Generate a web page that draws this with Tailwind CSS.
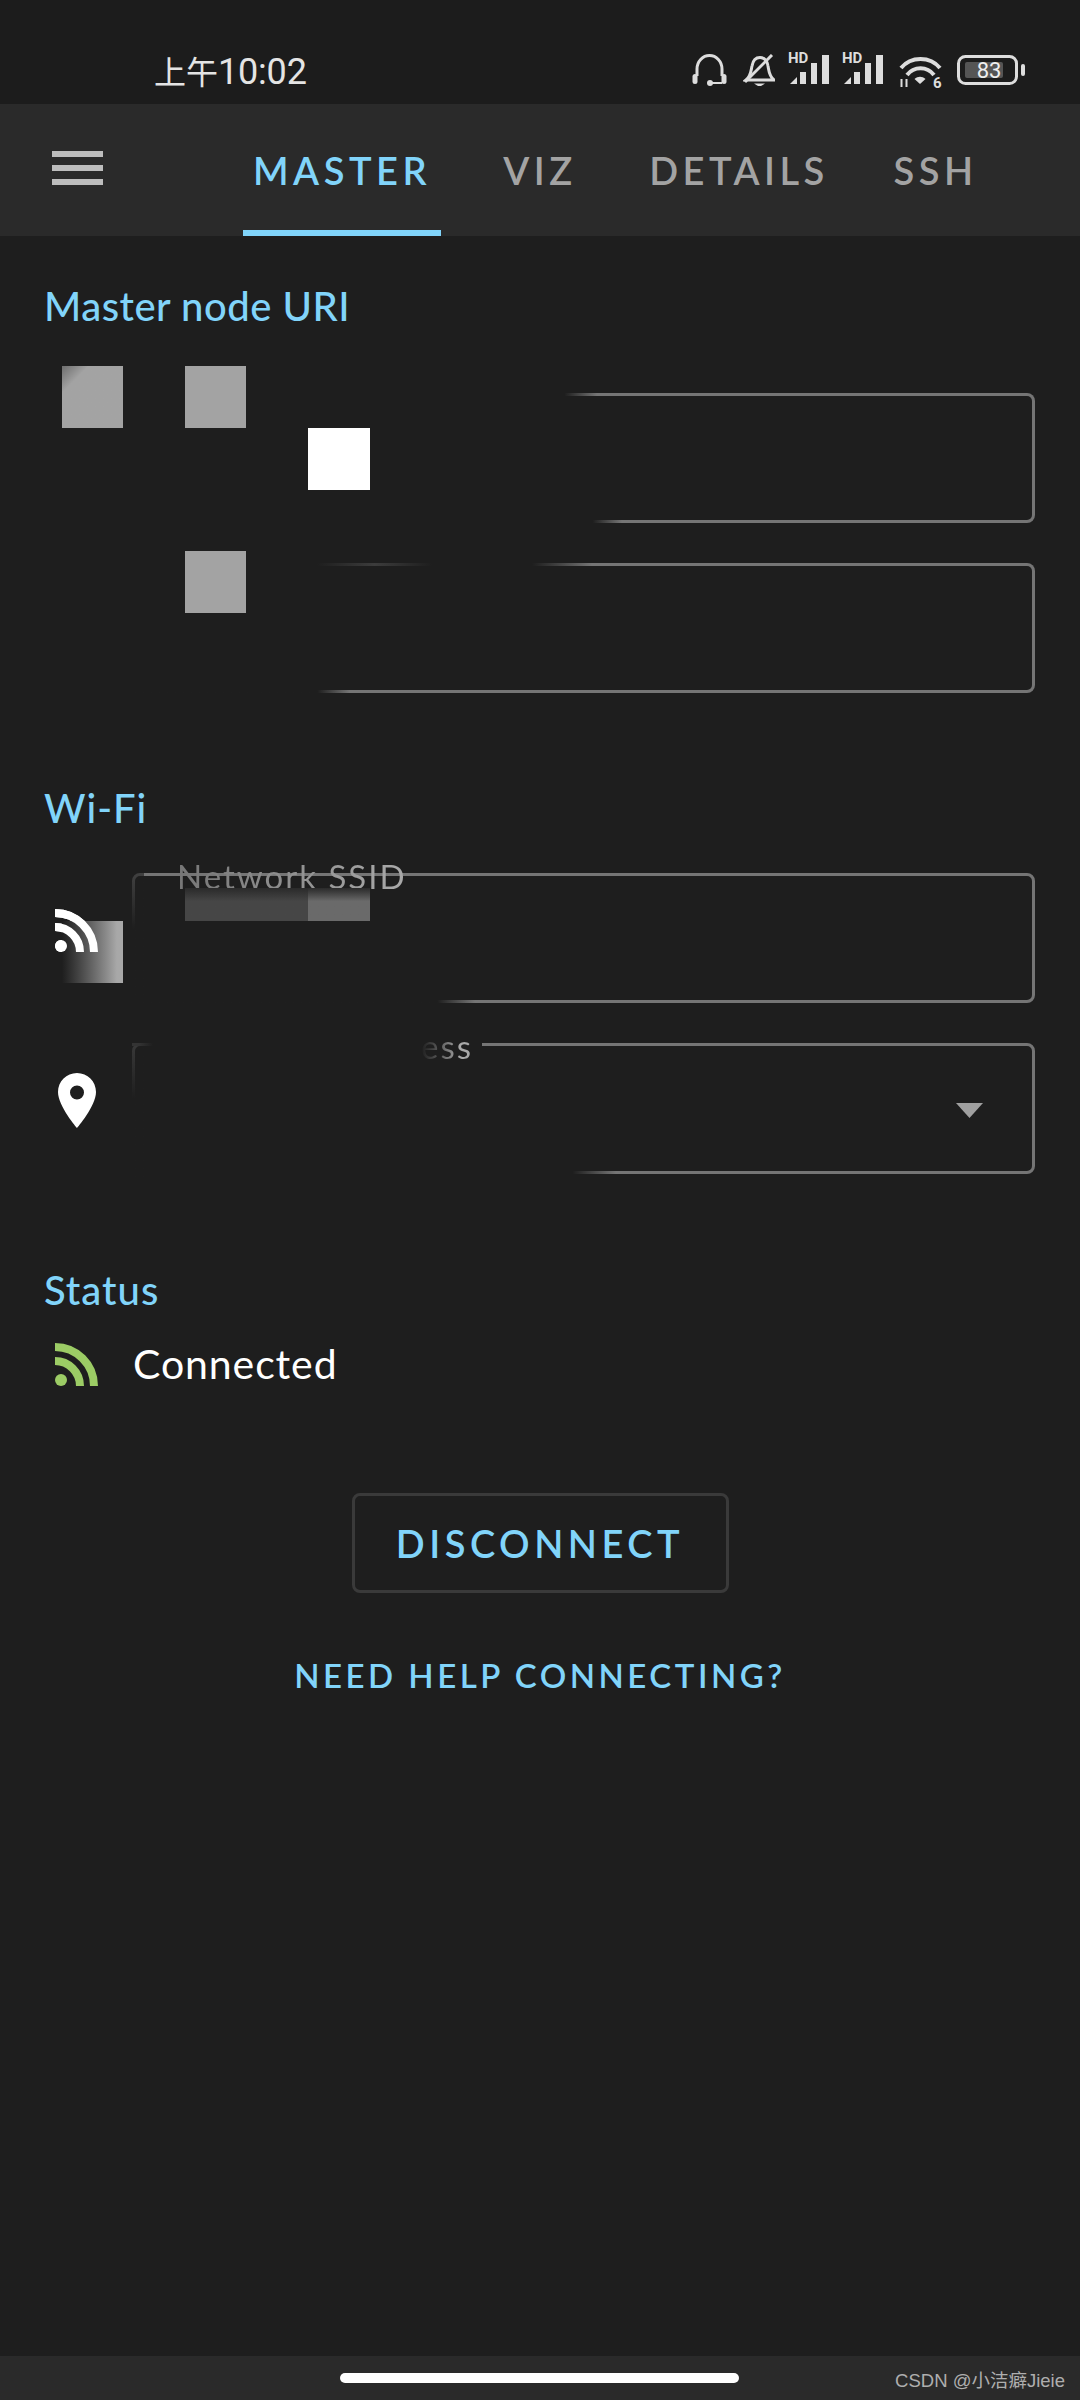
<!DOCTYPE html>
<html lang="en">
<head>
  <meta charset="UTF-8" />
  <title>Master</title>
  <script src="https://cdn.jsdelivr.net/npm/@tailwindcss/browser@4"></script>
</head>
<body class="bg-[#1e1e1e] font-['Lato','Noto_Sans_CJK_SC',sans-serif] text-white">
<div class="relative w-[1080px] h-[2400px] overflow-hidden flex flex-col">

  <!-- status bar -->
  <div class="h-[104px] shrink-0 bg-[#1c1c1c] flex items-start">
    <div class="ml-[154px] mt-[52px] flex items-baseline leading-[40px] text-[#e4e4e4] font-['Roboto','Noto_Sans_CJK_SC',sans-serif]">
      <span class="text-[32px]">上午</span>
      <span class="text-[36px] tracking-[-0.2px]">10:02</span>
    </div>
    <div class="ml-auto mr-[55px] mt-[47px] flex items-start">
      <svg class="mt-[7px]" width="35" height="32" viewBox="0 0 35 32" fill="none" stroke="#ddd" stroke-width="3"><path d="M5 22V15A12.5 13.500 0 0 1 30 15V22"/><rect x="0.500" y="20" width="5" height="10" rx="2.500" fill="#ddd" stroke="none"/><rect x="29.500" y="20" width="5" height="10" rx="2.500" fill="#ddd" stroke="none"/><path d="M18 29H30" stroke-width="2"/><circle cx="18" cy="29" r="3" fill="#ddd" stroke="none"/></svg>
      <svg class="ml-[16px] mt-[7px]" width="32" height="32" viewBox="0 0 32 32" fill="none" stroke="#ddd" stroke-width="3"><path d="M3 26C8 22 8 16 9 12C10 6 13 3.500 17 3.500C21 3.500 24 6 25 12C26 17 26 22 31 26Z"/><path d="M29 1L2 28"/><path d="M11 29.500H22L18 32H15Z" fill="#ddd" stroke="none"/></svg>
      <svg class="ml-[13px]" width="41" height="37" viewBox="0 -5 41 37" fill="#ddd"><text x="0" y="11" font-size="15" font-weight="700" font-family="Roboto">HD</text><path d="M2 32L9 25V32Z"/><rect x="12" y="20" width="6" height="12"/><rect x="23" y="11" width="6" height="21"/><rect x="34" y="3" width="7" height="29"/></svg>
      <svg class="ml-[13px]" width="41" height="37" viewBox="0 -5 41 37" fill="#ddd"><text x="0" y="11" font-size="15" font-weight="700" font-family="Roboto">HD</text><path d="M2 32L9 25V32Z"/><rect x="12" y="20" width="6" height="12"/><rect x="23" y="11" width="6" height="21"/><rect x="34" y="3" width="7" height="29"/></svg>
      <svg class="ml-[16px] mt-[8px]" width="45" height="37" viewBox="0 0 45 37" fill="none" stroke="#ddd" stroke-width="4"><path d="M2 13C12 1 31 1 41 13"/><path d="M8 20C15 11 28 11 35 20"/><path d="M15.500 24L21 29L26.500 24C23 21 19 21 15.500 24Z" fill="#ddd" stroke="none"/><path d="M2.500 24V32M7.500 24V32" stroke-width="2"/><text x="34" y="33" font-size="15" font-weight="700" font-family="Roboto" fill="#ddd" stroke="none">6</text></svg>
      <svg class="ml-[13px] mt-[8px]" width="68" height="30" viewBox="0 0 68 30" fill="none"><rect x="1.500" y="1.500" width="58" height="27" rx="7" stroke="#ddd" stroke-width="3"/><rect x="8" y="7" width="38" height="16" rx="2" fill="#555"/><text x="32" y="22.500" text-anchor="middle" font-size="22" font-family="Roboto" fill="#eee">83</text><rect x="64" y="9" width="4" height="12" rx="2" fill="#ddd"/></svg>
    </div>
  </div>

  <!-- tabs -->
  <div class="h-[132px] shrink-0 bg-[#2a2a2a] flex items-stretch">
    <div class="w-[243px] shrink-0 pl-[52px] pt-[47px] flex flex-col gap-[8px]">
      <span class="block w-[51px] h-[6px] bg-[#bdbdbd]"></span>
      <span class="block w-[51px] h-[6px] bg-[#bdbdbd]"></span>
      <span class="block w-[51px] h-[6px] bg-[#bdbdbd]"></span>
    </div>
    <div class="flex text-[38px] font-semibold tracking-[4.500px] leading-[48px] text-[#a3a3a3]">
      <div class="w-[198px] pt-[42px] text-center text-[#81d4fa] border-b-[6px] border-[#81d4fa]">MASTER</div>
      <div class="w-[198px] pt-[42px] text-center">VIZ</div>
      <div class="w-[200px] pt-[42px] text-center">DETAILS</div>
      <div class="w-[193px] pt-[42px] text-center">SSH</div>
    </div>
  </div>

  <main class="flex-1 px-[45px] pt-[46px] flex flex-col">
    <h2 class="-ml-[1px] text-[40px] tracking-[0.500px] leading-[48px] text-[#81d4fa] font-medium">Master node URI</h2>
    <div class="mt-[63px] flex flex-col gap-[40px]">
      <div class="relative ml-[87px] h-[130px] border-[3px] border-l-0 border-[#757575] rounded-r-lg">
        <div class="absolute left-0 -top-[3px] w-[465px] h-[3px] bg-linear-to-r from-[#1e1e1e] from-[93%] to-transparent"></div>
        <div class="absolute left-0 -bottom-[3px] w-[490px] h-[3px] bg-linear-to-r from-[#1e1e1e] from-[94%] to-transparent"></div>
      </div>
      <div class="relative ml-[87px] h-[130px] border-[3px] border-l-0 border-[#757575] rounded-r-lg">
        <div class="absolute left-0 -top-[3px] w-[460px] h-[3px] bg-[#1e1e1e]"></div>
        <div class="absolute left-[185px] -top-[3px] w-[115px] h-[3px] bg-linear-to-r from-transparent via-[#3c3c3c] to-transparent"></div>
        <div class="absolute left-[400px] -top-[3px] w-[60px] h-[3px] bg-linear-to-r from-[#1e1e1e] to-[#757575]"></div>
        <div class="absolute left-0 -bottom-[3px] w-[218px] h-[3px] bg-linear-to-r from-[#1e1e1e] from-[85%] to-transparent"></div>
      </div>
    </div>

    <h2 class="-ml-[1px] mt-[91px] text-[40px] tracking-[1px] leading-[48px] text-[#81d4fa] font-medium">Wi-Fi</h2>
    <div class="mt-[41px] flex flex-col gap-[40px]">
      <div class="flex items-start">
        <svg class="ml-[10px] mr-[34px] mt-[36px] shrink-0" width="43" height="43" viewBox="0 0 43 43" fill="none" stroke="#fff" stroke-width="8"><circle cx="6" cy="37" r="6" fill="#fff" stroke="none"/><path d="M0 18A25 25 0 0 1 25 43"/><path d="M0 4A39 39 0 0 1 39 43"/></svg>
        <div class="relative flex-1 h-[130px] border-[3px] border-[#757575] rounded-lg">
          <div class="absolute -left-[3px] -top-[3px] w-[12px] h-[133px] bg-linear-to-b from-[#1e1e1e]/60 to-[#1e1e1e] to-[42%]"></div>
          <div class="absolute -left-[3px] -bottom-[3px] w-[343px] h-[3px] bg-linear-to-r from-[#1e1e1e] from-[89%] to-transparent"></div>
          <span class="absolute left-[30px] -top-[20px] px-[12px] bg-[#1e1e1e] text-[33px] leading-[40px] tracking-[2px] text-transparent bg-clip-text bg-linear-to-r from-[#747474] to-[#adadad] whitespace-nowrap">Network SSID</span>
        </div>
      </div>
      <div class="flex items-start">
        <svg class="ml-[13px] mr-[36px] mt-[30px] shrink-0" width="38" height="55" viewBox="0 0 38 55" fill="#fff"><path fill-rule="evenodd" d="M19 0C8.500 0 0 8.500 0 19C0 33 19 55 19 55S38 33 38 19C38 8.500 29.500 0 19 0ZM19 12.500A7 7 0 1 1 19 26.500A7 7 0 1 1 19 12.500Z"/></svg>
        <div class="relative flex-1 h-[131px] border-[3px] border-[#757575] rounded-lg">
          <div class="absolute -left-[3px] -top-[3px] w-[350px] h-[3px] bg-linear-to-r from-[#333] from-[2%] to-[#1e1e1e] to-[6%]"></div>
          <div class="absolute -left-[3px] top-0 w-[12px] h-[131px] bg-linear-to-b from-[#1e1e1e]/70 to-[#1e1e1e] to-[40%]"></div>
          <div class="absolute -left-[3px] -bottom-[3px] w-[484px] h-[3px] bg-linear-to-r from-[#1e1e1e] from-[91%] to-transparent"></div>
          <span class="absolute left-[30px] -top-[20px] w-[320px] h-[40px] pr-[12px] bg-[#1e1e1e] text-right text-[33px] leading-[40px] tracking-[2px] text-transparent bg-clip-text bg-linear-to-r from-[#1e1e1e] from-[80%] to-[#a8a8a8] to-[92%] whitespace-nowrap">ess</span>
          <svg class="absolute right-[49px] top-[57px]" width="27" height="15" viewBox="0 0 27 15" fill="#a0a0a0"><path d="M0 0H27L13.500 15Z"/></svg>
        </div>
      </div>
    </div>

    <h2 class="-ml-[1px] mt-[92px] text-[40px] tracking-[1px] leading-[48px] text-[#81d4fa] font-medium">Status</h2>
    <div class="mt-[26px] flex items-center h-[48px]">
      <svg class="ml-[10px] mr-[35px]" width="43" height="43" viewBox="0 0 43 43" fill="none" stroke="#9ccc65" stroke-width="8"><circle cx="6" cy="37" r="6" fill="#9ccc65" stroke="none"/><path d="M0 18A25 25 0 0 1 25 43"/><path d="M0 4A39 39 0 0 1 39 43"/></svg>
      <span class="text-[41px] tracking-[0.900px] leading-[48px] text-white">Connected</span>
    </div>

    <button class="mt-[105px] mx-auto w-[377px] h-[100px] border-[3px] border-[#3a3a3a] rounded-lg text-[38px] font-semibold tracking-[4.500px] text-[#81d4fa]">DISCONNECT</button>
    <a class="mt-[62px] text-center text-[33px] leading-[40px] font-semibold tracking-[3.500px] text-[#81d4fa]">NEED HELP CONNECTING?</a>
  </main>

  <!-- nav bar -->
  <div class="h-[44px] shrink-0 bg-[#2a2a2a] relative">
    <div class="absolute left-[340px] top-[17px] w-[399px] h-[10px] rounded-full bg-white"></div>
    <span class="absolute right-[15px] top-[13px] text-[18.500px] leading-[24px] text-[#aeaeae] font-['Liberation_Sans','Noto_Sans_CJK_SC',sans-serif]">CSDN @小洁癖Jieie</span>
  </div>

  <!-- mosaic redaction over the fields -->
  <div class="absolute left-[62px] top-[366px] w-[61px] h-[62px] bg-linear-to-br from-[#6e6e6e] to-[#a3a3a3] to-[22%]"></div>
  <div class="absolute left-[185px] top-[366px] w-[61px] h-[62px] bg-[#a3a3a3]"></div>
  <div class="absolute left-[308px] top-[428px] w-[62px] h-[62px] bg-white"></div>
  <div class="absolute left-[185px] top-[551px] w-[61px] h-[62px] bg-[#a3a3a3]"></div>
  <div class="absolute left-[185px] top-[888px] w-[123px] h-[33px] bg-linear-to-b from-[#2a2a2a] to-[#464646] to-[40%]"></div>
  <div class="absolute left-[308px] top-[888px] w-[62px] h-[33px] bg-linear-to-b from-[#2a2a2a] to-[#6a6a6a] to-[40%]"></div>
  <div class="absolute left-[62px] top-[921px] w-[61px] h-[62px] bg-linear-to-r from-[#1e1e1e] to-[#a8a8a8] to-[90%]"></div>
  <svg class="absolute left-[55px] top-[909px]" width="43" height="43" viewBox="0 0 43 43" fill="none" stroke="#fff" stroke-width="8"><circle cx="6" cy="37" r="6" fill="#fff" stroke="none"/><path d="M0 18A25 25 0 0 1 25 43"/><path d="M0 4A39 39 0 0 1 39 43"/></svg>
</div>
</body>
</html>
